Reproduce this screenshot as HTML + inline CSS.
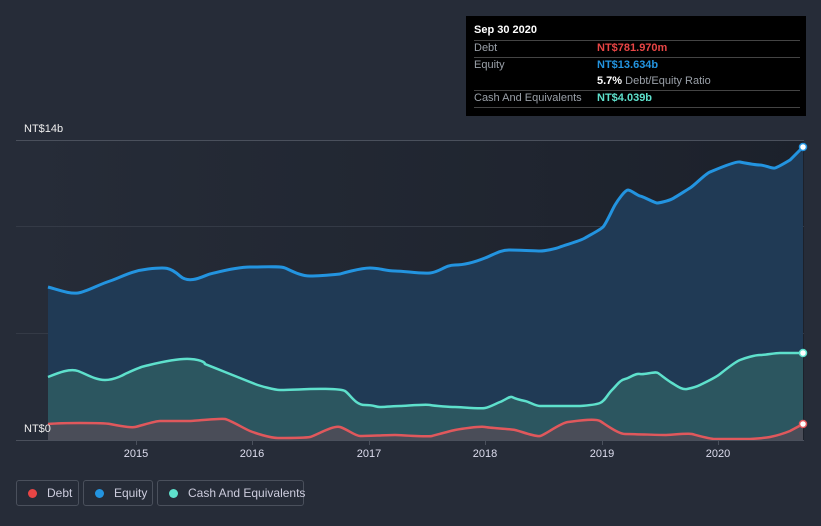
<!DOCTYPE html>
<html><head><style>
body{margin:0;width:821px;height:526px;background:#262c38;font-family:"Liberation Sans",sans-serif;overflow:hidden;position:relative}
.tt{position:absolute;left:466px;top:16px;width:340px;height:100px;background:#000}
.tt div{position:absolute;font-size:11px;color:#9aa0a8;white-space:nowrap}
.ln{position:absolute;left:8px;width:326px;height:1px;background:#444}
.lg{position:absolute;top:480px;height:26px;border:1px solid #4a505c;border-radius:3px;color:#ccd;font-size:12px;line-height:24px;box-sizing:border-box;white-space:nowrap}
.lg i{display:inline-block;width:9px;height:9px;border-radius:50%;margin:0 10px 0 11px;vertical-align:-1px}
</style></head><body>
<svg width="821" height="526" style="position:absolute;left:0;top:0">
<defs><linearGradient id="bg" x1="0" x2="1"><stop offset="0" stop-color="#262c38"/><stop offset="1" stop-color="#1c212b"/></linearGradient></defs>
<rect x="16" y="140" width="788" height="300" fill="url(#bg)"/>
<line x1="16" y1="140.5" x2="804" y2="140.5" stroke="#4a505c"/>
<line x1="16" y1="226.5" x2="804" y2="226.5" stroke="#343a46"/>
<line x1="16" y1="333.5" x2="804" y2="333.5" stroke="#343a46"/>
<path d="M48,287 C62,291 70,294 78,293 S100,284 110,281 S130,271 148,269 S170,267 180,276 S205,275 210,274 S235,267 250,267 S280,266 285,268 S300,276 310,276 S340,274 340,274 S360,268 370,268 S385,271 395,271 S420,274 430,273 S445,265 455,265 S475,262 485,258 S500,250 510,250 S535,251 540,251 S555,249 560,247 S580,241 585,238 S600,230 603,227 S612,210 615,205 S625,190 628,190 S638,196 640,196 S655,203 657,203 S668,201 672,199 S685,191 690,188 S705,174 710,172 S735,161 740,162 S755,165 760,165 S772,169 775,168 S785,163 790,160 L803,147 L803,440 L48,440Z" fill="#203a55"/>
<path d="M48,377 C58,373 70,368 78,371 S95,380 105,380 S125,374 125,374 S140,367 145,366 S175,358 190,359 S205,364 205,364 S220,370 225,372 S250,382 255,384 S275,390 280,390 S310,389 310,389 S340,388 345,391 S355,405 365,405 S375,407 380,407 S395,406 400,406 S425,404 430,405 S450,407 455,407 S480,409 485,408 S495,404 500,402 S510,396 512,397 S520,400 525,401 S535,406 540,406 L580,406 S595,405 600,403 S607,395 612,390 S620,380 625,379 S635,373 640,374 S655,371 658,373 S667,380 672,383 S682,390 687,389 S696,387 700,385 S715,378 720,374 S735,362 740,360 S755,355 760,355 S775,353 780,353 L803,353 L803,440 L48,440Z" fill="#2c5660"/>
<path d="M48,424 C60,423 75,423 80,423 S105,423 110,424 S130,428 135,427 S155,421 160,421 S185,421 190,421 S220,418 225,419 S245,429 250,431 S270,438 278,438 S305,438 310,437 S333,425 340,427 S355,436 360,436 S390,435 395,435 S428,437 432,436 S450,431 455,430 S480,426 485,427 S510,429 515,430 S535,437 540,436 S560,423 568,422 S595,418 600,421 S618,434 625,434 S660,435 665,435 S688,433 692,434 S710,439 715,439 L750,439 S765,438 770,437 S785,433 790,431 L803,424 L803,440 L48,440Z" fill="#4a4d58"/>
<path d="M48,287 C62,291 70,294 78,293 S100,284 110,281 S130,271 148,269 S170,267 180,276 S205,275 210,274 S235,267 250,267 S280,266 285,268 S300,276 310,276 S340,274 340,274 S360,268 370,268 S385,271 395,271 S420,274 430,273 S445,265 455,265 S475,262 485,258 S500,250 510,250 S535,251 540,251 S555,249 560,247 S580,241 585,238 S600,230 603,227 S612,210 615,205 S625,190 628,190 S638,196 640,196 S655,203 657,203 S668,201 672,199 S685,191 690,188 S705,174 710,172 S735,161 740,162 S755,165 760,165 S772,169 775,168 S785,163 790,160 L803,147" fill="none" stroke="#2394e0" stroke-width="3"/>
<path d="M48,377 C58,373 70,368 78,371 S95,380 105,380 S125,374 125,374 S140,367 145,366 S175,358 190,359 S205,364 205,364 S220,370 225,372 S250,382 255,384 S275,390 280,390 S310,389 310,389 S340,388 345,391 S355,405 365,405 S375,407 380,407 S395,406 400,406 S425,404 430,405 S450,407 455,407 S480,409 485,408 S495,404 500,402 S510,396 512,397 S520,400 525,401 S535,406 540,406 L580,406 S595,405 600,403 S607,395 612,390 S620,380 625,379 S635,373 640,374 S655,371 658,373 S667,380 672,383 S682,390 687,389 S696,387 700,385 S715,378 720,374 S735,362 740,360 S755,355 760,355 S775,353 780,353 L803,353" fill="none" stroke="#5ee0cc" stroke-width="2.5"/>
<path d="M48,424 C60,423 75,423 80,423 S105,423 110,424 S130,428 135,427 S155,421 160,421 S185,421 190,421 S220,418 225,419 S245,429 250,431 S270,438 278,438 S305,438 310,437 S333,425 340,427 S355,436 360,436 S390,435 395,435 S428,437 432,436 S450,431 455,430 S480,426 485,427 S510,429 515,430 S535,437 540,436 S560,423 568,422 S595,418 600,421 S618,434 625,434 S660,435 665,435 S688,433 692,434 S710,439 715,439 L750,439 S765,438 770,437 S785,433 790,431 L803,424" fill="none" stroke="#e0585c" stroke-width="2.5"/>
<line x1="16" y1="440.5" x2="804" y2="440.5" stroke="#4a505c"/>
<circle cx="803" cy="147" r="3.5" fill="#fff" stroke="#2394e0" stroke-width="1.5"/>
<circle cx="803" cy="353" r="3.5" fill="#fff" stroke="#5ee0cc" stroke-width="1.5"/>
<circle cx="803" cy="424" r="3.5" fill="#fff" stroke="#e0585c" stroke-width="1.5"/>
<g stroke="#4a505c"><line x1="136.5" y1="440" x2="136.5" y2="445"/><line x1="252.5" y1="440" x2="252.5" y2="445"/><line x1="369.5" y1="440" x2="369.5" y2="445"/><line x1="485.5" y1="440" x2="485.5" y2="445"/><line x1="602.5" y1="440" x2="602.5" y2="445"/><line x1="718.5" y1="440" x2="718.5" y2="445"/></g>
<g fill="#dde" font-size="11" font-family="Liberation Sans" text-anchor="middle"><text x="136" y="457">2015</text><text x="252" y="457">2016</text><text x="369" y="457">2017</text><text x="485" y="457">2018</text><text x="602" y="457">2019</text><text x="718" y="457">2020</text></g>
<text x="24" y="132" fill="#eee" font-size="11" font-family="Liberation Sans">NT$14b</text>
<text x="24" y="432" fill="#eee" font-size="11" font-family="Liberation Sans">NT$0</text>
</svg>
<div class="tt">
<div style="left:8px;top:8px;color:#fff;font-weight:bold">Sep 30 2020</div>
<div class="ln" style="top:24px"></div>
<div style="left:8px;top:26px">Debt</div><div style="left:131px;top:26px;color:#e84545;font-weight:bold">NT$781.970m</div>
<div class="ln" style="top:41px"></div>
<div style="left:8px;top:43px">Equity</div><div style="left:131px;top:43px;color:#2394e0;font-weight:bold">NT$13.634b</div>
<div style="left:131px;top:59px"><b style="color:#fff">5.7%</b> Debt/Equity Ratio</div>
<div class="ln" style="top:74px"></div>
<div style="left:8px;top:76px">Cash And Equivalents</div><div style="left:131px;top:76px;color:#5ee0cc;font-weight:bold">NT$4.039b</div>
<div class="ln" style="top:91px"></div>
</div>
<div class="lg" style="left:16px;width:63px"><i style="background:#e84545"></i>Debt</div>
<div class="lg" style="left:83px;width:70px"><i style="background:#2394e0"></i>Equity</div>
<div class="lg" style="left:157px;width:147px"><i style="background:#5ee0cc"></i>Cash And Equivalents</div>
</body></html>
